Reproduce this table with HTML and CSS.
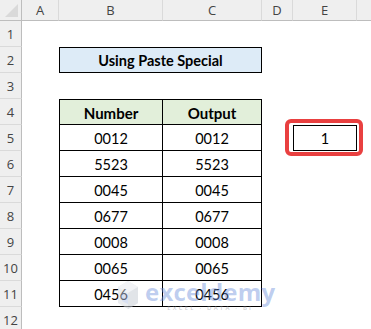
FILE: index.html
```html
<!DOCTYPE html>
<html lang="en">
<head>
    <meta charset="UTF-8">
    <title>Using Paste Special</title>
    <link rel="stylesheet" href="styles.css">
</head>
<body>
    <div class="sheet">
        <!-- Column headers -->
        <div class="corner"></div>
        <div class="colhead">A</div>
        <div class="colhead">B</div>
        <div class="colhead">C</div>
        <div class="colhead">D</div>
        <div class="colhead">E</div>
        <div class="colhead last"></div>

        <!-- Row 1 -->
        <div class="rowhead">1</div>
        <div class="blank"></div>

        <!-- Row 2 -->
        <div class="rowhead">2</div>
        <div class="gap-a"></div>
        <div class="title">Using Paste Special</div>
        <div class="rest"></div>

        <!-- Row 3 -->
        <div class="rowhead">3</div>
        <div class="blank"></div>

        <!-- Row 4 -->
        <div class="rowhead">4</div>
        <div class="gap-a"></div>
        <div class="cell head first top">Number</div>
        <div class="cell head top">Output</div>
        <div class="rest"></div>

        <!-- Row 5 -->
        <div class="rowhead">5</div>
        <div class="gap-a"></div>
        <div class="cell first">0012</div>
        <div class="cell">0012</div>
        <div class="gap-d"></div>
        <div class="result">1</div>
        <div class="gap-f"></div>

        <div class="rowhead">6</div>
        <div class="gap-a"></div>
        <div class="cell first">5523</div>
        <div class="cell">5523</div>
        <div class="rest"></div>

        <div class="rowhead">7</div>
        <div class="gap-a"></div>
        <div class="cell first">0045</div>
        <div class="cell">0045</div>
        <div class="rest"></div>

        <div class="rowhead">8</div>
        <div class="gap-a"></div>
        <div class="cell first">0677</div>
        <div class="cell">0677</div>
        <div class="rest"></div>

        <div class="rowhead">9</div>
        <div class="gap-a"></div>
        <div class="cell first">0008</div>
        <div class="cell">0008</div>
        <div class="rest"></div>

        <div class="rowhead">10</div>
        <div class="gap-a"></div>
        <div class="cell first">0065</div>
        <div class="cell">0065</div>
        <div class="rest"></div>

        <div class="rowhead">11</div>
        <div class="gap-a"></div>
        <div class="cell first">0456</div>
        <div class="cell">0456</div>
        <div class="rest"></div>

        <div class="rowhead">12</div>
        <div class="blank"></div>
    </div>

    <!-- Watermark -->
    <div class="watermark">
        <svg class="wm-logo" width="22" height="30" viewBox="0 0 22 30">
            <polygon points="11,1 21,7 21,23 11,29 1,23 1,7" fill="#d6dae0"/>
            <polygon points="11,1 21,7 11,13 1,7" fill="#e6e9ee"/>
            <polygon points="11,13 21,7 21,23 11,29" fill="#c4cad3"/>
            <polygon points="5,12 11,15 11,24 5,21" fill="#b3c3e6"/>
        </svg>
        <div class="wm-text">
            <div class="wm-name">exceldemy</div>
            <div class="wm-sub">EXCEL · DATA · BI</div>
        </div>
    </div>
</body>
</html>
```

FILE: styles.css
```css
/* Sheet grid */
body {
    margin: 0;
    background-color: #ffffff;
    font-family: 'Lato', 'Liberation Sans', sans-serif;
    overflow: hidden;
}

.sheet {
    display: grid;
    grid-template-columns: 22px 37px 104px 99px 31px 64px 14px;
    grid-template-rows: 21px repeat(12, 26px);
    width: 371px;
}

/* Headers */
.corner,
.colhead,
.rowhead {
    background-color: #efefef;
    color: #444444;
    font-family: 'Open Sans', 'Noto Sans', sans-serif;
    font-size: 13px;
    display: flex;
    align-items: center;
    justify-content: center;
    box-sizing: border-box;
}

.corner {
    position: relative;
    border-right: 1px solid #bdbdbd;
    border-bottom: 1px solid #bdbdbd;
}

.corner::after {
    content: "";
    position: absolute;
    right: 3px;
    bottom: 3px;
    border-left: 13px solid transparent;
    border-bottom: 13px solid #d9d9d9;
}

.colhead {
    border-bottom: 1px solid #bdbdbd;
    border-right: 1px solid #dadada;
}

.colhead.last {
    border-right: none;
}

.rowhead {
    border-right: 1px solid #bdbdbd;
    border-bottom: 1px solid #dadada;
    padding-top: 1px;
}

/* Empty areas */
.blank {
    grid-column: 2 / 8;
}

.rest {
    grid-column: 5 / 8;
}

/* Table */
.title {
    grid-column: 3 / 5;
    background-color: #ddebf7;
    border: 1px solid #000000;
    font-weight: 700;
    font-size: 14.5px;
    display: flex;
    align-items: center;
    justify-content: center;
    color: #000000;
}

.cell {
    border-right: 1px solid #000000;
    border-bottom: 1px solid #000000;
    display: flex;
    align-items: center;
    justify-content: center;
    font-size: 14.5px;
    color: #000000;
    box-sizing: border-box;
    padding-top: 1px;
}

.cell.first {
    border-left: 1px solid #000000;
}

.cell.top {
    border-top: 1px solid #000000;
}

.cell.head {
    background-color: #e2efda;
    font-weight: 700;
    font-size: 15px;
}

/* Result cell with highlight */
.result {
    position: relative;
    border: 1px solid #000000;
    display: flex;
    align-items: center;
    justify-content: center;
    font-size: 14.5px;
    color: #000000;
}

.result::before {
    content: "";
    position: absolute;
    left: -9px;
    right: -7px;
    top: -7px;
    bottom: -6px;
    border: 4px solid #e94040;
    border-radius: 6px;
}

/* Watermark */
.watermark {
    position: absolute;
    left: 117px;
    top: 280px;
    display: flex;
    align-items: flex-start;
    gap: 6px;
}

.wm-logo {
    opacity: 0.5;
}

.wm-text {
    display: flex;
    flex-direction: column;
    align-items: center;
}

.wm-name {
    font-family: 'Open Sans', sans-serif;
    font-weight: 700;
    font-size: 24px;
    line-height: 24px;
    color: rgba(110, 145, 220, 0.45);
    letter-spacing: 0.2px;
}

.wm-sub {
    font-family: 'Open Sans', sans-serif;
    font-weight: 600;
    font-size: 6px;
    letter-spacing: 2.2px;
    color: rgba(140, 140, 150, 0.45);
    margin-top: 0;
}
```
